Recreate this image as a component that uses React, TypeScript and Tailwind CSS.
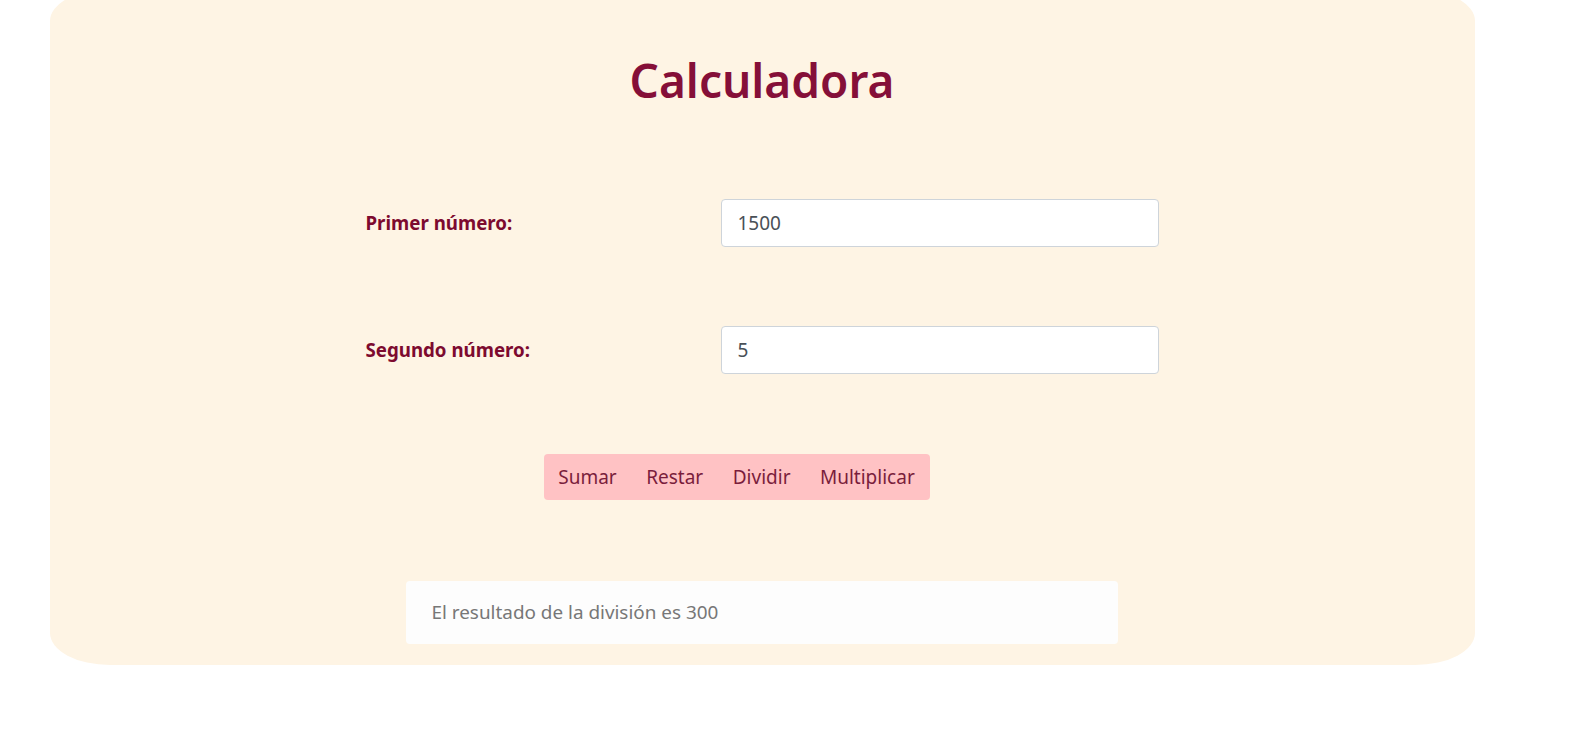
import React from "react";

const font = { fontFamily: '"Noto Sans", "Open Sans", sans-serif' };

export default function App() {
  const ops = ["Sumar", "Restar", "Dividir", "Multiplicar"];
  return (
    <div className="min-h-[754px] bg-white overflow-hidden" style={font}>
      <div className="ml-[50px] -mt-[11px] w-[1425px] h-[676px] bg-[#fef4e4] rounded-[60px/32px] flex flex-col items-center">
        <h1 className="mt-[62px] ml-[-1px] text-[46px] leading-[58px] font-semibold text-[#850f38]">
          Calculadora
        </h1>

        <div className="mt-[90px] ml-[-1px] w-[793px] flex items-center h-[48px]">
          <label className="w-[355px] text-[18.7px] font-bold text-[#7d0a2f]">Primer número:</label>
          <input
            defaultValue="1500"
            className="w-[438px] h-[48px] bg-white border border-[#ced4da] rounded-[4px] px-4 text-[19px] text-[#495057] outline-none"
          />
        </div>

        <div className="mt-[79px] ml-[-1px] w-[793px] flex items-center h-[48px]">
          <label className="w-[355px] text-[18.7px] font-bold text-[#7d0a2f]">Segundo número:</label>
          <input
            defaultValue="5"
            className="w-[438px] h-[48px] bg-white border border-[#ced4da] rounded-[4px] px-4 text-[19px] text-[#495057] outline-none"
          />
        </div>

        <div className="mt-20 ml-[-52px] flex h-[46px] bg-[#ffc2c4] rounded-[4px]">
          {ops.map((o) => (
            <button key={o} className="px-[14.75px] text-[19px] text-[#7a1d3c]">
              {o}
            </button>
          ))}
        </div>

        <div className="mt-[81px] ml-[-2px] w-[712px] h-[63px] bg-[#fdfdfd] rounded-[4px] flex items-center px-[26px] text-[18.9px] text-[#777777]">
          El resultado de la división es 300
        </div>
      </div>
    </div>
  );
}
